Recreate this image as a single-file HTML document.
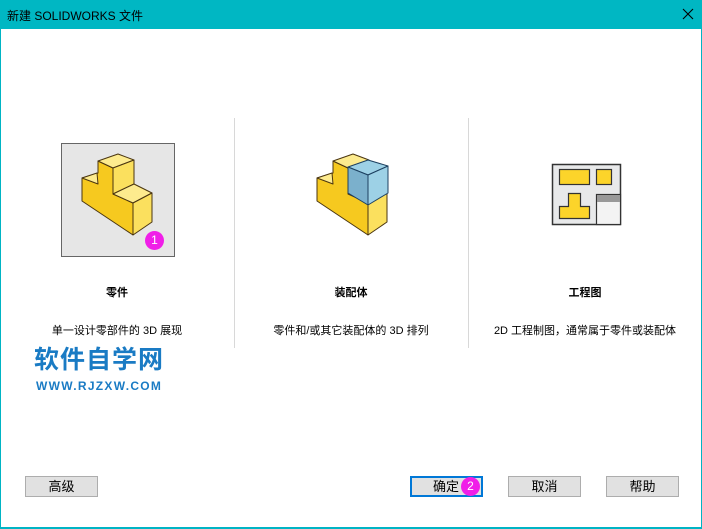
<!DOCTYPE html>
<html><head><meta charset="utf-8"><style>
html,body{margin:0;padding:0;width:702px;height:529px;overflow:hidden;background:#fff;font-family:"Liberation Sans","Noto Sans CJK SC",sans-serif;}
.win{position:absolute;left:0;top:0;width:700px;height:527px;border-left:1px solid #00b4c4;border-right:1px solid #00b4c4;border-bottom:2px solid #00b4c4;}
.title{position:absolute;left:0;top:0;width:702px;height:29px;background:#00b7c3;}
.title span{position:absolute;left:7px;top:7px;font-size:12px;color:#000;}
.t{position:absolute;font-size:11px;color:#000;text-align:center;width:234px;}
.b{font-weight:bold;}
.div{position:absolute;top:118px;width:1px;height:230px;background:#d8d8d8;}
.btn{position:absolute;top:476px;width:71px;height:19px;border:1px solid #adadad;background:#e1e1e1;font-size:13px;text-align:center;line-height:19px;}
.badge{position:absolute;width:19px;height:19px;border-radius:50%;background:#f01ee8;color:#fff;font-size:12px;text-align:center;line-height:19px;}
</style></head><body>
<div class="win"></div>
<div class="title"><span>新建 SOLIDWORKS 文件</span>
<svg style="position:absolute;left:682px;top:8px" width="12" height="12"><path d="M1,1 L11,11 M11,1 L1,11" stroke="#000" stroke-width="1.1"/></svg></div>
<div class="div" style="left:234px"></div>
<div class="div" style="left:468px"></div>
<div style="position:absolute;left:61px;top:143px;width:112px;height:112px;border:1px solid #666;background:#e6e6e6"></div>
<svg style="position:absolute;left:0;top:0" width="702" height="529">
<g stroke="#4a3510" stroke-width="1" stroke-linejoin="round">
<polygon points="82,178 82,201 133,235 133,203 113,194 113,168 98,161 98,173" fill="#f6c91f"/>
<polygon points="82,178 97,173 98,184" fill="#fdeb8e"/>
<polygon points="98,161 118,154 134,160 113,168" fill="#fdeb8e"/>
<polygon points="113,168 134,160 134,184 113,194" fill="#fbe05e"/>
<polygon points="113,194 134,184 152,193 133,203" fill="#fdeb8e"/>
<polygon points="133,203 152,193 152,222 133,235" fill="#fbe05e"/>
</g>
<g stroke="#4a3510" stroke-width="1" stroke-linejoin="round" transform="translate(235,0)">
<polygon points="82,178 82,201 133,235 133,203 113,194 113,168 98,161 98,173" fill="#f6c91f"/>
<polygon points="82,178 97,173 98,184" fill="#fdeb8e"/>
<polygon points="98,161 118,154 134,160 113,168" fill="#fdeb8e"/>
<polygon points="133,203 152,193 152,222 133,235" fill="#fbe05e"/>
</g>
<g stroke="#1d4060" stroke-width="1" stroke-linejoin="round">
<polygon points="348,167 368,160 388,166 368,175" fill="#9dd1e6"/>
<polygon points="368,175 388,166 388,193 368,205" fill="#9dd1e6"/>
<polygon points="348,167 368,175 368,205 348,193" fill="#7bb0cc"/>
</g>
<rect x="552.5" y="164.5" width="68" height="60" fill="#e8e9ea" stroke="#333" stroke-width="1.5"/>
<rect x="559.5" y="169.5" width="30" height="15" fill="#fcd42a" stroke="#333" stroke-width="1.2"/>
<rect x="596.5" y="169.5" width="15" height="15" fill="#fcd42a" stroke="#333" stroke-width="1.2"/>
<polygon points="568.5,193.5 580.5,193.5 580.5,206.5 589.5,206.5 589.5,218.5 559.5,218.5 559.5,206.5 568.5,206.5" fill="#fcd42a" stroke="#333" stroke-width="1.2"/>
<rect x="596.5" y="194.5" width="24" height="30" fill="#f3f3f3" stroke="#333" stroke-width="1.2"/>
<rect x="597" y="195" width="23" height="7" fill="#999"/>
</svg>
<div class="badge" style="left:145px;top:231px">1</div>
<div class="t b" style="left:0;top:284px">零件</div>
<div class="t b" style="left:234px;top:284px">装配体</div>
<div class="t b" style="left:468px;top:284px">工程图</div>
<div class="t" style="left:0;top:322px">单一设计零部件的 3D 展现</div>
<div class="t" style="left:234px;top:322px">零件和/或其它装配体的 3D 排列</div>
<div class="t" style="left:468px;top:322px">2D 工程制图，通常属于零件或装配体</div>
<div style="position:absolute;left:34px;top:346px;font-size:25px;font-weight:bold;color:#1a7bc4;letter-spacing:1px;line-height:28px">软件自学网</div>
<div style="position:absolute;left:36px;top:379px;font-size:12px;font-weight:bold;color:#1a7bc4;letter-spacing:1.3px">WWW.RJZXW.COM</div>
<div class="btn" style="left:25px">高级</div>
<div class="btn" style="left:410px;border:2px solid #0078d7;width:69px;height:17px;line-height:17px;text-align:left;padding-left:0"><span style="margin-left:21px">确定</span></div>
<div class="badge" style="left:461px;top:477px">2</div>
<div class="btn" style="left:508px">取消</div>
<div class="btn" style="left:606px">帮助</div>
</body></html>
